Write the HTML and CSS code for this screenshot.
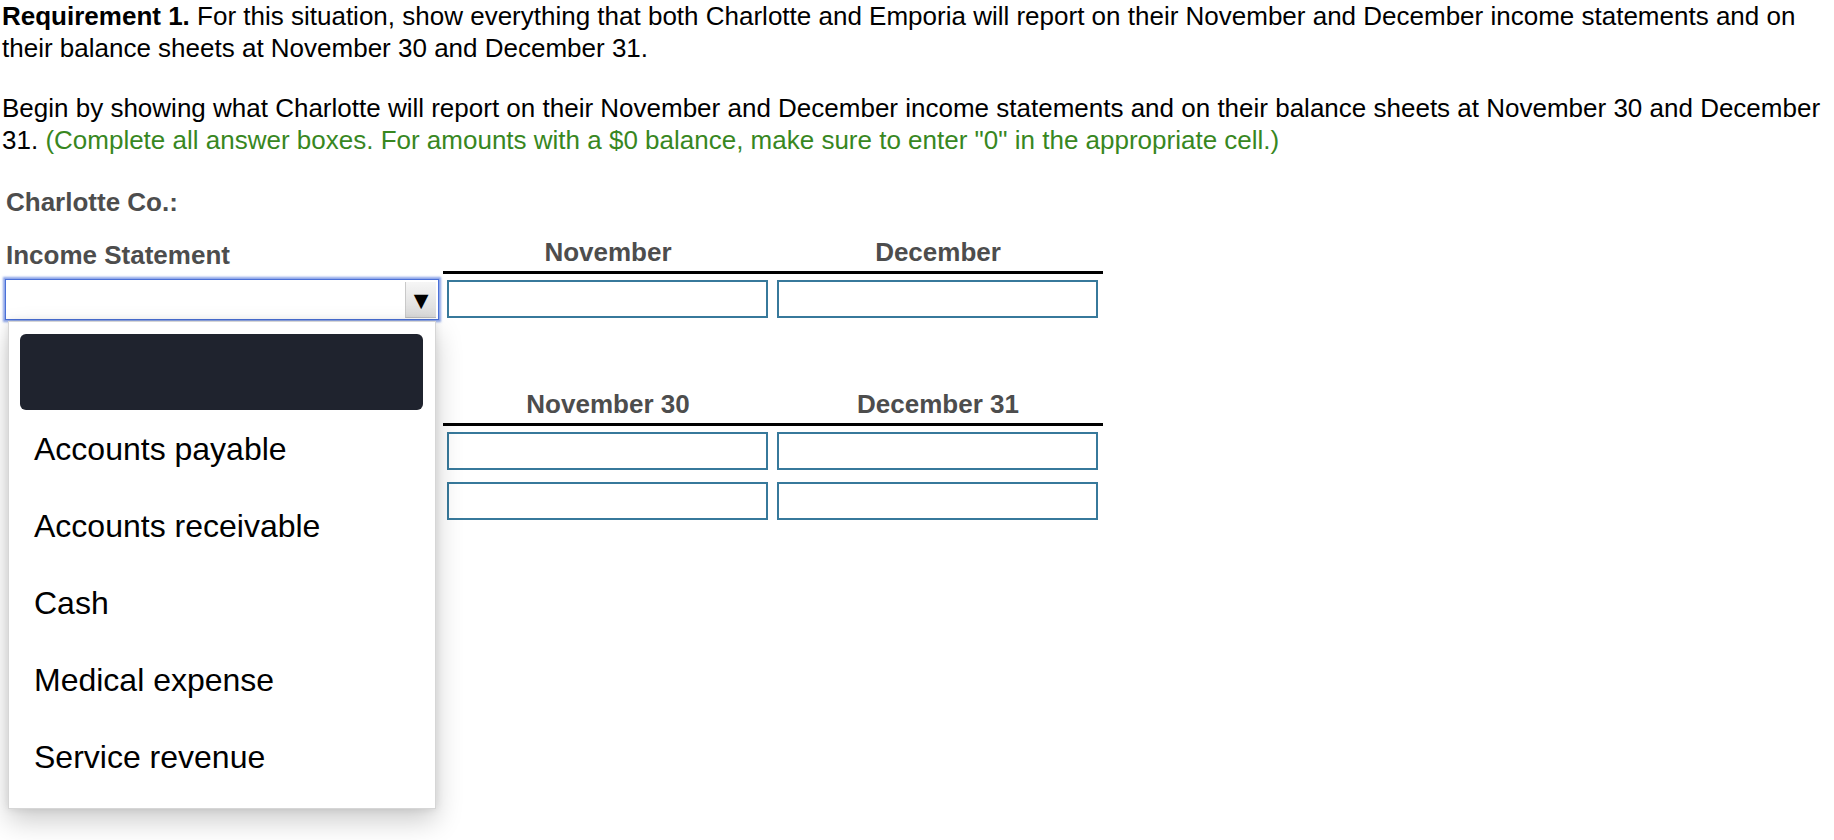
FILE: index.html
```html
<!DOCTYPE html>
<html lang="en">
<head>
<meta charset="UTF-8">
<meta name="viewport" content="width=device-width, initial-scale=1.0">
<title>Requirement 1</title>
<link rel="stylesheet" href="styles.css">
</head>
<body>
<div class="question">
    <p><strong>Requirement 1.</strong> For this situation, show everything that both Charlotte and Emporia will report on their November and December income statements and on their balance sheets at November 30 and December 31.</p>
    <p>Begin by showing what Charlotte will report on their November and December income statements and on their balance sheets at November 30 and December 31. <span class="hint">(Complete all answer boxes. For amounts with a $0 balance, make sure to enter "0" in the appropriate cell.)</span></p>
</div>

<h3 class="company">Charlotte Co.:</h3>

<div class="sheet">
    <div class="label-cell">Income Statement</div>
    <div class="col-head">November</div>
    <div class="col-head">December</div>

    <div class="pick-cell">
        <div class="select focused">
            <span class="arrow">&#9660;</span>
        </div>
        <ul class="dropdown">
            <li class="active"></li>
            <li>Accounts payable</li>
            <li>Accounts receivable</li>
            <li>Cash</li>
            <li>Medical expense</li>
            <li>Service revenue</li>
        </ul>
    </div>
    <div class="amt-cell"><input type="text"></div>
    <div class="amt-cell"><input type="text"></div>

    <div class="label-cell"></div>
    <div class="col-head spaced">November 30</div>
    <div class="col-head spaced">December 31</div>

    <div class="pick-cell"></div>
    <div class="amt-cell"><input type="text"></div>
    <div class="amt-cell"><input type="text"></div>

    <div class="pick-cell"></div>
    <div class="amt-cell"><input type="text"></div>
    <div class="amt-cell"><input type="text"></div>
</div>
</body>
</html>
```

FILE: styles.css
```css
html {
    height: 100%;
}
body {
    font-family: "Liberation Sans", Arial, sans-serif;
    font-size: 26px;
    line-height: 32px;
    color: #000;
    background-color: #fff;
    margin: 0;
    padding: 0;
    min-height: 100%;
}

.question p {
    margin: 0 0 28px;
    padding-left: 2px;
}
.question p:last-child {
    margin-bottom: 0;
}
.hint {
    color: #38871f;
}

.company {
    margin: 30px 0 0;
    padding-left: 6px;
    font-size: 26px;
    color: #4d4d4d;
}

.sheet {
    display: grid;
    grid-template-columns: 443px 330px 330px;
    align-items: end;
}
.label-cell {
    padding: 0 0 3px 6px;
    font-weight: bold;
    color: #4d4d4d;
}
.col-head {
    text-align: center;
    font-weight: bold;
    color: #4d4d4d;
    padding: 18px 0 3px;
    border-bottom: 3px solid #000;
}
.col-head.spaced {
    padding: 64px 0 3px;
}

.pick-cell {
    position: relative;
    padding: 5px 4px 4px 5px;
    align-self: stretch;
}
.amt-cell {
    padding: 6px 5px 6px 4px;
}
input[type="text"] {
    display: block;
    box-sizing: border-box;
    width: 321px;
    height: 38px;
    border: 2px solid #37799b;
    padding: 0 6px;
    font-size: 22px;
    background: #fff;
}

/* fake select with focus ring */
.select {
    box-sizing: border-box;
    height: 41px;
    border: 1px solid #4a70d8;
    box-shadow: 0 0 2px 2px rgba(60, 100, 215, 0.6);
    background: #fff;
    display: flex;
    justify-content: flex-end;
    align-items: stretch;
    padding: 2px 2px 1px 0;
}
.arrow {
    width: 30px;
    display: flex;
    align-items: center;
    justify-content: center;
    font-size: 25px;
    color: #000;
    background: linear-gradient(#f6f6f6, #d9d9d9);
    border-left: 1px solid #c9c9c9;
    border-bottom: 1px solid #bdbdbd;
}

.dropdown {
    position: absolute;
    top: 47px;
    left: 8px;
    width: 428px;
    box-sizing: border-box;
    margin: 0;
    padding: 12px 12px 12px 11px;
    list-style: none;
    background: #fff;
    border: 1px solid #d6d6d6;
    box-shadow: 0 12px 26px rgba(0, 0, 0, 0.2), 0 0 8px rgba(0, 0, 0, 0.1);
    z-index: 10;
}
.dropdown li {
    height: 77px;
    line-height: 77px;
    padding-left: 14px;
    font-size: 32px;
    color: #000;
}
.dropdown li.active {
    height: 76px;
    margin-bottom: 1px;
    background-color: #1f232e;
    border-radius: 6px;
}
```
